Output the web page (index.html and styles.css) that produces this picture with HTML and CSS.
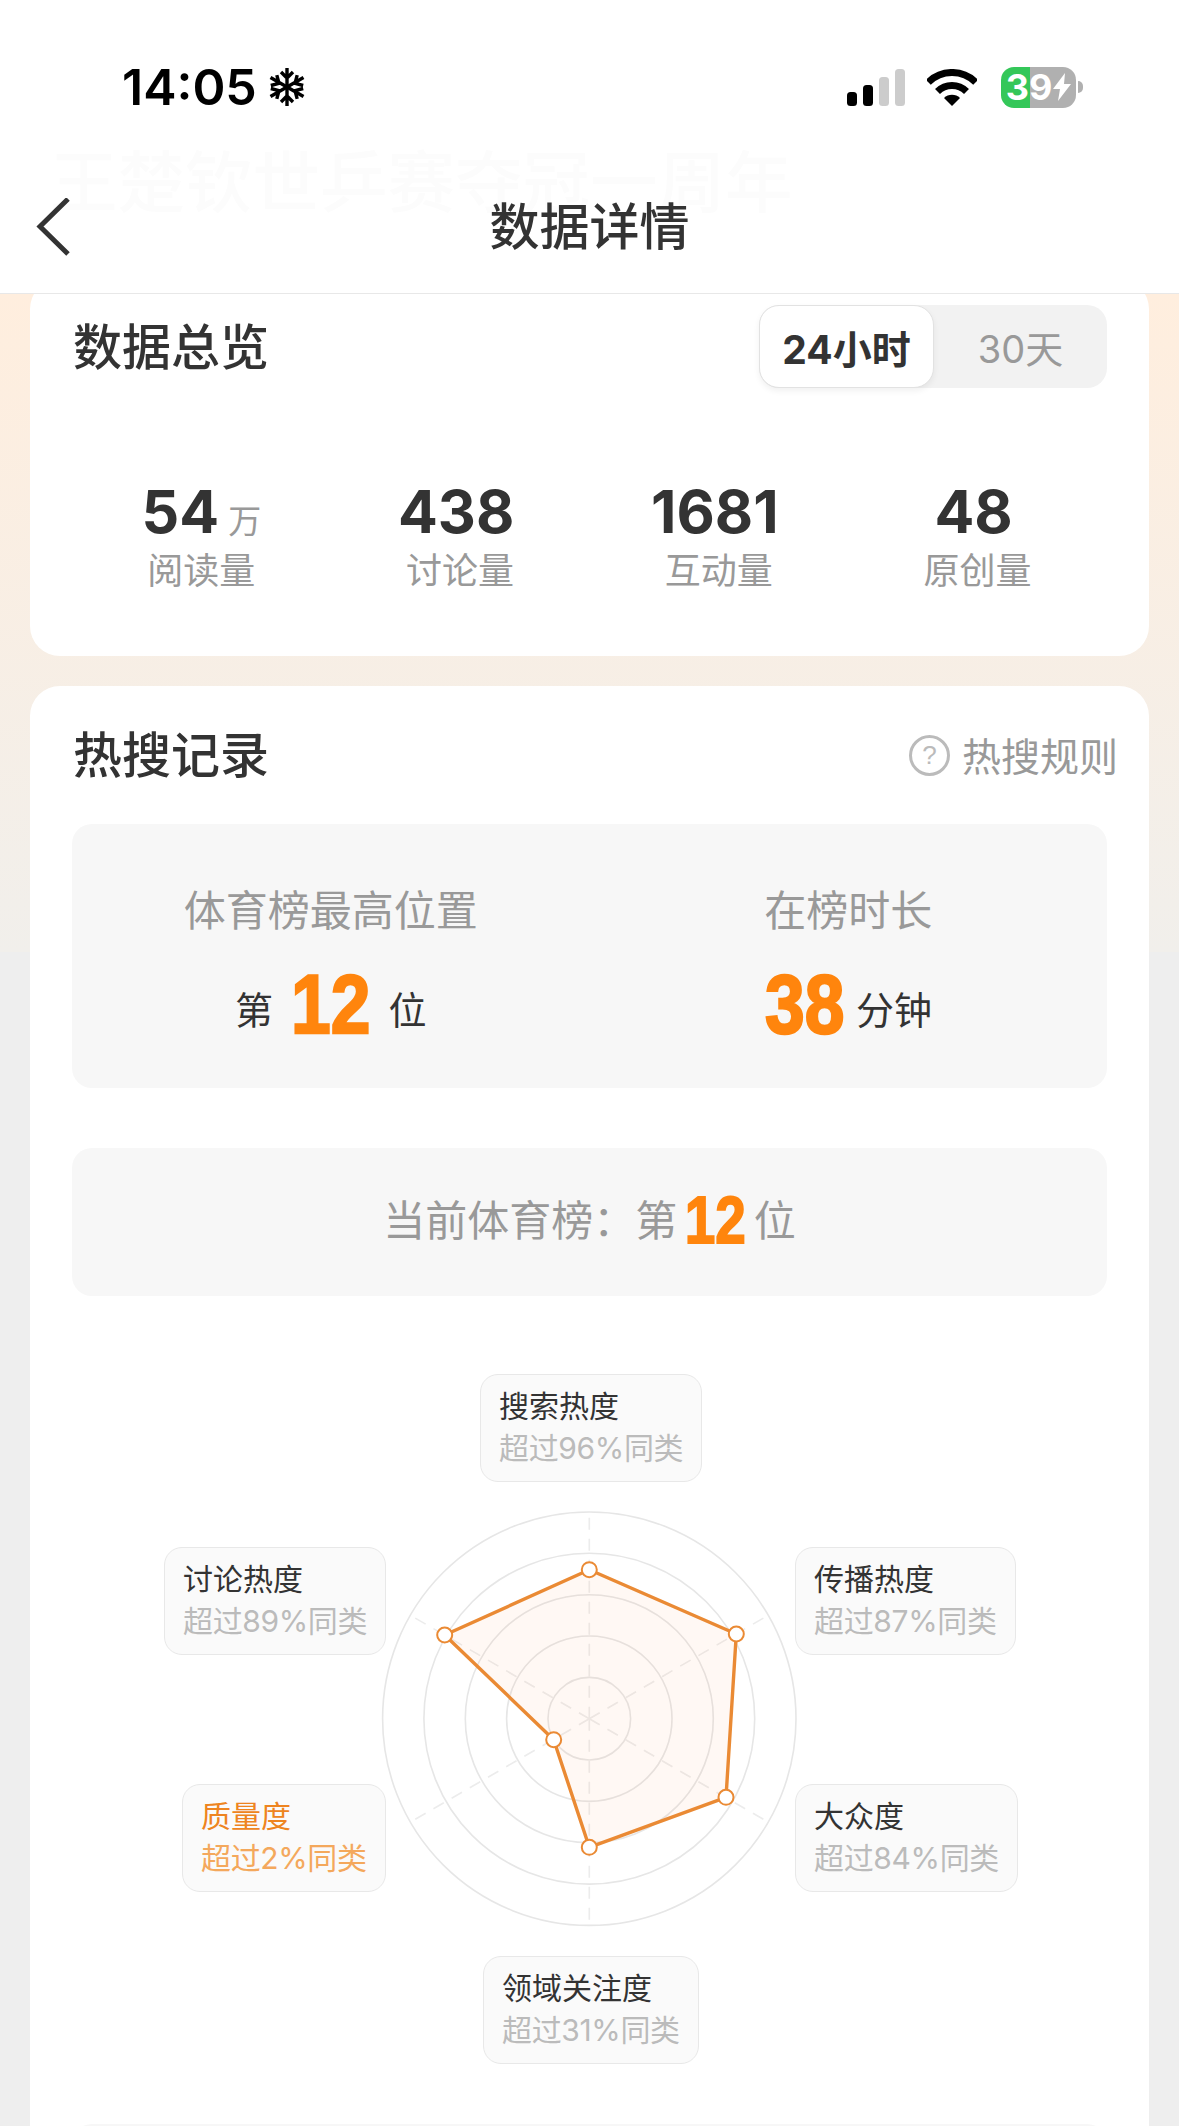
FILE: index.html
```html
<!DOCTYPE html>
<html lang="zh-CN">
<head>
<meta charset="utf-8">
<title>数据详情</title>
<link rel="stylesheet" href="styles.css">
</head>
<body>
<div class="page">
  <header class="top">
    <div class="ghost">王楚钦世乒赛夺冠一周年</div>
    <div class="status">
      <div class="status-left">
        <span class="time">14:05</span>
        <svg class="snow" viewBox="0 0 36 40" width="36" height="40" fill="none" stroke="#000" stroke-width="3.4">
          <path d="M18 1V39M12 5l6 6 6-6M12 35l6-6 6 6"/>
          <path d="M1.5 10.5 34.5 29.5M1.8 18.5l8.2-2.2L7.8 8.1M34.2 21.5 26 23.7l2.2 8.2"/>
          <path d="M1.5 29.5 34.5 10.5M7.8 31.9 10 23.7l-8.2-2.2M28.2 8.1 26 16.3l8.2 2.2"/>
        </svg>
      </div>
      <div class="status-right">
        <svg class="signal" viewBox="0 0 58 37" width="58" height="37">
          <rect x="0" y="23" width="10" height="14" rx="3.5" fill="#000"/>
          <rect x="16" y="16" width="10" height="21" rx="3.5" fill="#000"/>
          <rect x="32" y="8" width="10" height="29" rx="3.5" fill="#ccc"/>
          <rect x="48" y="0" width="10" height="37" rx="3.5" fill="#ccc"/>
        </svg>
        <svg class="wifi" viewBox="0 0 50 37" width="50" height="37" fill="none" stroke="#000">
          <path stroke-width="7" d="M1.3 13.3A33.5 33.5 0 0 1 48.7 13.3"/>
          <path stroke-width="7" d="M10.5 22.5A20.5 20.5 0 0 1 39.5 22.5"/>
          <path fill="#000" stroke="none" d="M25 37 17 29A11.3 11.3 0 0 1 33 29Z"/>
        </svg>
        <div class="battery-wrap">
          <div class="battery">
            <span>39</span>
            <svg viewBox="0 0 18 28" width="18" height="28"><path fill="#fff" d="M12 0 0 16h7l-2 12L18 11h-7z"/></svg>
          </div>
          <i class="battery-cap"></i>
        </div>
      </div>
    </div>
    <nav class="nav">
      <svg class="back" viewBox="0 0 36 60" width="36" height="60" fill="none" stroke="#333" stroke-width="5"><path d="M32 1 4 28.5 32 56"/></svg>
      <h1 class="title">数据详情</h1>
      <span></span>
    </nav>
  </header>

  <main class="main">
    <section class="card card-overview">
      <div class="card-head">
        <h2 class="card-title">数据总览</h2>
        <div class="segment">
          <span class="seg-on">24小时</span>
          <span class="seg-off">30天</span>
        </div>
      </div>
      <div class="stats">
        <div class="stat"><div class="num">54<span class="unit">万</span></div><div class="stat-label">阅读量</div></div>
        <div class="stat"><div class="num num-plain">438</div><div class="stat-label">讨论量</div></div>
        <div class="stat"><div class="num num-plain">1681</div><div class="stat-label">互动量</div></div>
        <div class="stat"><div class="num num-plain">48</div><div class="stat-label">原创量</div></div>
      </div>
    </section>

    <section class="card card-hot">
      <div class="hot-head">
        <h2 class="card-title">热搜记录</h2>
        <div class="rule"><span class="qmark">?</span><span>热搜规则</span></div>
      </div>
      <div class="panel peak">
        <div class="peak-col">
          <div class="peak-label">体育榜最高位置</div>
          <div class="peak-value wide"><span class="peak-text">第</span><span class="big">12</span><span class="peak-text">位</span></div>
        </div>
        <div class="peak-col">
          <div class="peak-label">在榜时长</div>
          <div class="peak-value"><span class="big">38</span><span class="peak-text">分钟</span></div>
        </div>
      </div>
      <div class="panel current">
        <span>当前体育榜：第</span><span class="mid">12</span><span>位</span>
      </div>
      <div class="radar">
        <svg class="radar-svg" viewBox="0 0 1032 828" width="1032" height="828" fill="none">
          <g stroke="#e6e6e6" stroke-width="1.6">
            <circle cx="516.3" cy="422.7" r="206.7"/>
            <circle cx="516.3" cy="422.7" r="165.4"/>
            <circle cx="516.3" cy="422.7" r="124"/>
            <circle cx="516.3" cy="422.7" r="82.7"/>
            <circle cx="516.3" cy="422.7" r="41.3"/>
          </g>
          <g stroke="#ececec" stroke-width="1.6" stroke-dasharray="12 9">
            <path d="M516.3 422.7V216"/>
            <path d="M516.3 422.7V629.4"/>
            <path d="M516.3 422.7 695.3 319.3"/>
            <path d="M516.3 422.7 695.3 526.1"/>
            <path d="M516.3 422.7 337.3 319.3"/>
            <path d="M516.3 422.7 337.3 526.1"/>
          </g>
          <path class="radar-shape" d="M516.3 273.7 663.3 338 653 501.3 516.3 551.3 480.7 443.7 371.7 339Z"/>
          <g class="radar-dots">
            <circle cx="516.3" cy="273.7" r="7.5"/>
            <circle cx="663.3" cy="338" r="7.5"/>
            <circle cx="653" cy="501.3" r="7.5"/>
            <circle cx="516.3" cy="551.3" r="7.5"/>
            <circle cx="480.7" cy="443.7" r="7.5"/>
            <circle cx="371.7" cy="339" r="7.5"/>
          </g>
        </svg>
        <div class="node n-search"><b>搜索热度</b><span>超过96%同类</span></div>
        <div class="node n-discuss"><b>讨论热度</b><span>超过89%同类</span></div>
        <div class="node n-spread"><b>传播热度</b><span>超过87%同类</span></div>
        <div class="node n-quality node-low"><b>质量度</b><span>超过2%同类</span></div>
        <div class="node n-public"><b>大众度</b><span>超过84%同类</span></div>
        <div class="node n-field"><b>领域关注度</b><span>超过31%同类</span></div>
      </div>
      <div class="panel next"></div>
    </section>
  </main>
</div>
</body>
</html>
```

FILE: styles.css
```css
* { box-sizing: border-box; }
html, body { margin: 0; padding: 0; background: #eee; }
body { font-family: Inter, "Noto Sans CJK SC", sans-serif; color: #333; }
.page { width: 1179px; height: 2126px; overflow: hidden; }

.top { position: relative; z-index: 2; height: 294px; background: #fff; border-bottom: 1px solid #e8e8e8; }
.ghost { position: absolute; left: 50px; top: 133px; font-family: "Noto Sans CJK SC", sans-serif; font-size: 67.5px; line-height: 90px; color: #fcfcfc; font-weight: 500; white-space: nowrap; }
.status { position: relative; height: 174px; display: flex; justify-content: space-between; align-items: center; padding: 0 96px 0 122px; }
.status-left { display: flex; align-items: center; gap: 12px; }
.time { font-family: Inter, "Liberation Sans", sans-serif; font-size: 50px; font-weight: 600; color: #000; line-height: 60px; }
.snow { display: block; }
.status-right { display: flex; align-items: center; gap: 22px; }
.signal, .wifi { display: block; }
.battery-wrap { display: flex; align-items: center; gap: 2px; margin-left: 2px; }
.battery { width: 75px; height: 41px; border-radius: 13px; background: linear-gradient(90deg, #34c759 0, #34c759 29px, #b0b0b0 29px); display: flex; align-items: center; justify-content: center; gap: 1px; color: #fff; font-family: Inter, "Liberation Sans", sans-serif; font-size: 36px; font-weight: 700; line-height: 41px; }
.battery-cap { display: block; width: 5px; height: 12px; background: #b0b0b0; border-radius: 0 6px 6px 0; }

.nav { position: relative; height: 108px; display: grid; grid-template-columns: 1fr auto 1fr; align-items: center; padding: 0 36px; }
.back { display: block; }
.title { margin: 0; font-family: "Noto Sans CJK SC", sans-serif; font-size: 50px; line-height: 60px; font-weight: 500; color: #333; padding-bottom: 10px; }

.main { height: 1832px; overflow: hidden; padding: 0 30px; background: linear-gradient(180deg, #ffeede 0, #f1efeb 658px, #eee 658px); display: flex; flex-direction: column; gap: 30px; }
.card { background: #fff; border-radius: 30px; padding: 0 42px; flex: none; }
.card-overview { margin-top: -15px; height: 377px; padding-top: 26px; }
.card-head { display: flex; justify-content: space-between; align-items: center; height: 83px; }
.card-title { margin: 0 0 0 1px; padding-bottom: 6px; font-family: "Noto Sans CJK SC", sans-serif; font-size: 49px; line-height: 60px; font-weight: 500; color: #333; }

.segment { width: 348px; height: 83px; border-radius: 20px; background: #f2f2f2; display: flex; align-items: center; font-size: 38px; }
.seg-on { width: 175px; height: 83px; display: flex; align-items: center; justify-content: center; background: #fff; border: 1.5px solid #e2e2e2; border-radius: 20px; box-shadow: 0 3px 6px rgba(0,0,0,.06); font-size: 39px; font-weight: 700; color: #333; }
.seg-off { flex: 1; text-align: center; color: #999; }

.stats { display: grid; grid-template-columns: repeat(4, 1fr); margin-top: 94px; }
.stat { display: flex; flex-direction: column; align-items: center; }
.num { display: flex; align-items: baseline; height: 60px; font-size: 59px; line-height: 60px; font-weight: 700; color: #333; }
.num-plain { padding-right: 8px; }
.unit { margin-left: 9px; font-family: "Noto Sans CJK SC", sans-serif; font-size: 33px; line-height: 33px; font-weight: 400; color: #999; }
.stat-label { margin-top: 6px; font-family: "Noto Sans CJK SC", sans-serif; font-size: 36px; line-height: 40px; color: #999; }

.card-hot { height: 1500px; }
.hot-head { display: flex; justify-content: space-between; align-items: center; height: 138px; }
.rule { display: flex; align-items: center; gap: 12px; margin-right: -11px; font-family: "Noto Sans CJK SC", sans-serif; font-size: 39px; line-height: 44px; color: #999; }
.rule span:last-child { padding-bottom: 3px; }
.qmark { width: 41px; height: 41px; border: 3px solid #bbb; border-radius: 50%; display: flex; align-items: center; justify-content: center; font-family: "Liberation Sans", sans-serif; font-size: 26px; line-height: 1; color: #bbb; }

.panel { background: #f7f7f7; border-radius: 20px; }
.peak { height: 264px; padding-top: 59px; display: grid; grid-template-columns: 1fr 1fr; }
.peak-col { display: flex; flex-direction: column; align-items: center; }
.peak-label { font-family: "Noto Sans CJK SC", sans-serif; font-size: 42px; line-height: 50px; color: #999; }
.peak-value { margin-top: 26px; height: 84px; display: flex; align-items: center; gap: 12px; }
.peak-value.wide { gap: 18px; }
.peak-text { padding-top: 14px; font-family: "Noto Sans CJK SC", sans-serif; font-size: 38px; line-height: 50px; color: #333; }
.big { display: inline-block; margin: 0 -7px; padding-top: 6px; transform: scaleX(.85); font-family: "Liberation Sans", sans-serif; font-size: 84px; line-height: 84px; font-weight: 700; color: #ff850d; -webkit-text-stroke: 2.4px #ff850d; }

.current { margin-top: 60px; height: 148px; padding-bottom: 8px; display: flex; align-items: center; justify-content: center; gap: 8px; font-family: "Noto Sans CJK SC", sans-serif; font-size: 42px; line-height: 50px; color: #999; }
.mid { display: inline-block; margin: 0 -7px; padding-top: 4px; transform: scaleX(.82); font-family: "Liberation Sans", sans-serif; font-size: 67px; line-height: 70px; font-weight: 700; color: #ff850d; -webkit-text-stroke: 1.8px #ff850d; }

.radar { position: relative; width: 1032px; height: 828px; margin-left: 1px; }
.radar-svg { position: absolute; left: 0; top: 0; display: block; }
.radar-shape { fill: rgba(250, 125, 50, .055); stroke: #ea8a34; stroke-width: 3.4; stroke-linejoin: round; }
.radar-dots circle { fill: #fff; stroke: #ea8a34; stroke-width: 2; }
.node { position: absolute; height: 108px; padding: 0 18px 3px; display: flex; flex-direction: column; justify-content: center; background: #fafafa; border: 1.6px solid #e8e8e8; border-radius: 18px; font-family: Inter, "Noto Sans CJK SC", sans-serif; font-size: 30px; line-height: 42px; }
.node b { font-weight: 400; color: #333; }
.node span { color: #bbb; letter-spacing: -.35px; }
.node-low b { color: #ee8420; }
.node-low span { color: #f4a85c; }
.n-search { left: 407px; top: 78px; }
.n-discuss { left: 91px; top: 251px; }
.n-spread { left: 722px; top: 251px; }
.n-quality { left: 109px; top: 488px; }
.n-public { left: 722px; top: 488px; }
.n-field { left: 410px; top: 660px; }
.next { height: 60px; }
```
